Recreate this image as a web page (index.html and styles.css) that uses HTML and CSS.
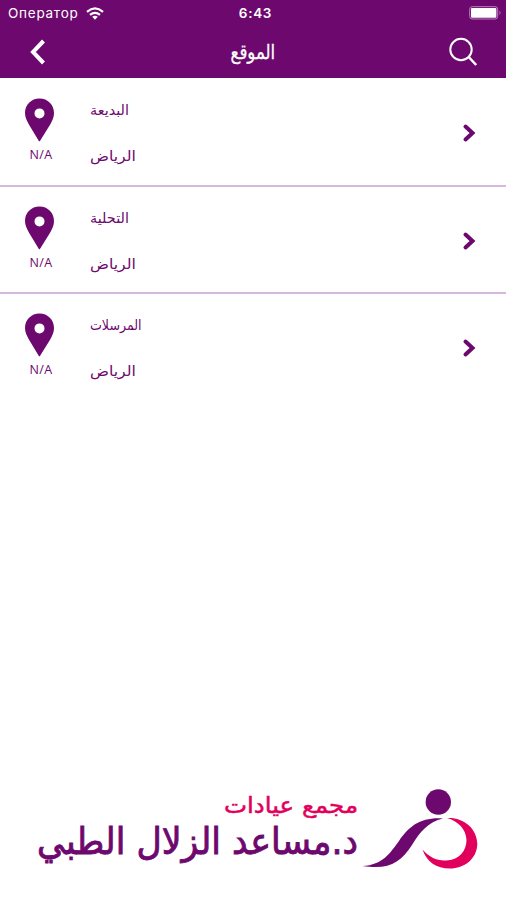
FILE: index.html
```html
<!DOCTYPE html>
<html lang="ar">
<head>
<meta charset="utf-8">
<title>الموقع</title>
<link rel="stylesheet" href="styles.css">
</head>
<body>
<svg class="defs" width="0" height="0" aria-hidden="true">
  <symbol id="pin" viewBox="0 0 30 44"><path fill-rule="evenodd" d="M15 .5C6.700.5.5 6.800.5 15c0 4 1.700 7.500 3.900 11.400L14.500 43.200h.8L25.700 26.400C28 22.500 29.500 19 29.500 15 29.500 6.800 23.300.5 15 .5ZM15 10.400a5 5 0 1 1 0 10 5 5 0 0 1 0-10Z"/></symbol>
  <symbol id="next" viewBox="0 0 14 20"><path d="M3.500 3.500l7 6.500-7 6.500" fill="none" stroke="currentColor" stroke-width="4" stroke-linecap="round" stroke-linejoin="miter"/></symbol>
</svg>
<div class="screen">
  <header class="header">
    <div class="status">
      <div class="carrier"><span>Оператор</span>
        <svg width="18" height="13" viewBox="0 0 18 13" fill="none" stroke="#fff" stroke-width="2.200"><path d="M1 4.800Q9-2 17 4.800M4 7.900Q9 3.700 14 7.900"/><path d="M6.200 9.800Q9 7.700 11.800 9.800L9 12.700Z" fill="#fff" stroke="none"/></svg>
      </div>
      <span class="time">6:43</span>
      <svg class="battery" width="33" height="14" viewBox="0 0 33 14"><rect x=".7" y=".7" width="28" height="12.300" rx="2.500" fill="none" stroke="#b982bc"/><rect x="2" y="2" width="25.400" height="9.700" rx="1" fill="#fff"/><path d="M30.500 4.500q2 2.300 0 4.600Z" fill="#b982bc"/></svg>
    </div>
    <nav class="nav">
      <svg class="back" width="18" height="26" viewBox="0 0 18 26"><path d="M15.500 2L5 13l10.500 11" fill="none" stroke="#fff" stroke-width="4"/></svg>
      <h1 class="title" dir="rtl">الموقع</h1>
      <svg class="search" width="30" height="30" viewBox="0 0 30 30" fill="none" stroke="#fff" stroke-width="2"><circle cx="13" cy="12.500" r="10.700"/><path d="M20.700 20l7.500 8" stroke-width="2.500"/></svg>
    </nav>
  </header>
  <main class="list">
    <div class="row"><div class="place"><svg class="pin"><use href="#pin"/></svg><span>N/A</span></div><div class="text"><span dir="rtl" class="name">البديعة</span><span dir="rtl" class="city">الرياض</span></div><svg class="next"><use href="#next"/></svg></div>
    <div class="row"><div class="place"><svg class="pin"><use href="#pin"/></svg><span>N/A</span></div><div class="text"><span dir="rtl" class="name">التحلية</span><span dir="rtl" class="city">الرياض</span></div><svg class="next"><use href="#next"/></svg></div>
    <div class="row"><div class="place"><svg class="pin"><use href="#pin"/></svg><span>N/A</span></div><div class="text"><span dir="rtl" class="name narrow">المرسلات</span><span dir="rtl" class="city">الرياض</span></div><svg class="next"><use href="#next"/></svg></div>
  </main>
  <footer class="footer">
    <svg width="446" height="92" viewBox="34 782 446 92">
      <g class="brand" direction="rtl">
        <text class="brand-small" x="358" y="813" textLength="134" lengthAdjust="spacingAndGlyphs">مجمع عيادات</text>
        <text class="brand-large" x="358" y="854" textLength="321" lengthAdjust="spacingAndGlyphs">د.مساعد الزلال الطبي</text>
      </g>
      <circle cx="438.300" cy="802" r="12.700" fill="#6d086e"/>
      <path fill="#6d086e" d="M362.500 866C383 865 390 853 399 841C409 826 421 817 443 818.500C428 822 420 832 412 845C400 863 389 870 362.500 866Z"/>
      <path fill="#e2005d" d="M447 818C463 817 477 828 477.300 844C477 859 464 868.500 450 868.500C436 868.500 427 862 422.500 849.500C429 857 437 861 446 860.500C459 860 466.500 851 466.500 840C466 829 458 821 447 818Z"/>
    </svg>
  </footer>
</div>
</body>
</html>
```
FILE: styles.css
```css
* { box-sizing: border-box; }
body { margin: 0; background: #fff; color: #6d086e; font-family: "DejaVu Sans", sans-serif; }
.defs { display: none; }
.screen { width: 506px; height: 900px; display: flex; flex-direction: column; overflow: hidden; }
.header { height: 78px; background: #6d086e; color: #fff; }
.status { height: 26px; display: grid; grid-template-columns: 1fr auto 1fr; align-items: center; padding: 0 4px 0 8px; font-family: Inter, sans-serif; font-size: 13.5px; }
.carrier { display: flex; align-items: center; gap: 7px; letter-spacing: .75px; }
.time { font-weight: 600; letter-spacing: .7px; padding-left: 1px; }
.battery { justify-self: end; }
.nav { height: 52px; display: grid; grid-template-columns: 1fr auto 1fr; align-items: center; padding: 0 28px; }
.search { justify-self: end; }
.title { margin: 0; font-size: 20px; font-weight: 400; line-height: 30px; transform: scaleX(.83); -webkit-text-stroke: .3px; }
.list { padding-top: 1px; }
.row { height: 107.5px; border-bottom: 2px solid #d6b8dc; display: flex; padding: 19px 30px 0 24px; }
.row:last-child { border-bottom: 0; }
.place { width: 66px; font-family: "Open Sans", sans-serif; font-size: 12.5px; line-height: 14px; }
.place span { display: block; margin: 6px 0 0 5.5px; letter-spacing: .4px; }
.pin { display: block; width: 31px; height: 44px; fill: #6d086e; }
.text { display: flex; flex-direction: column; align-items: flex-start; flex: 1; font-size: 14px; line-height: 24px; }
.text span { transform-origin: left center; }
.name { transform: scaleX(1.03); }
.narrow { transform: scaleX(.9); }
.city { margin-top: 22px; transform: scaleX(1.12); }
.next { width: 14px; height: 20px; margin-top: 25px; }
.footer { margin-top: auto; padding: 0 26px 26px 34px; }
.footer svg { display: block; }
.brand { fill: #6d086e; font-family: "DejaVu Sans", sans-serif; }
.brand-small { font-size: 22px; fill: #e2005d; stroke: #e2005d; stroke-width: .5px; }
.brand-large { font-size: 37px; stroke: #6d086e; stroke-width: .9px; }
```
